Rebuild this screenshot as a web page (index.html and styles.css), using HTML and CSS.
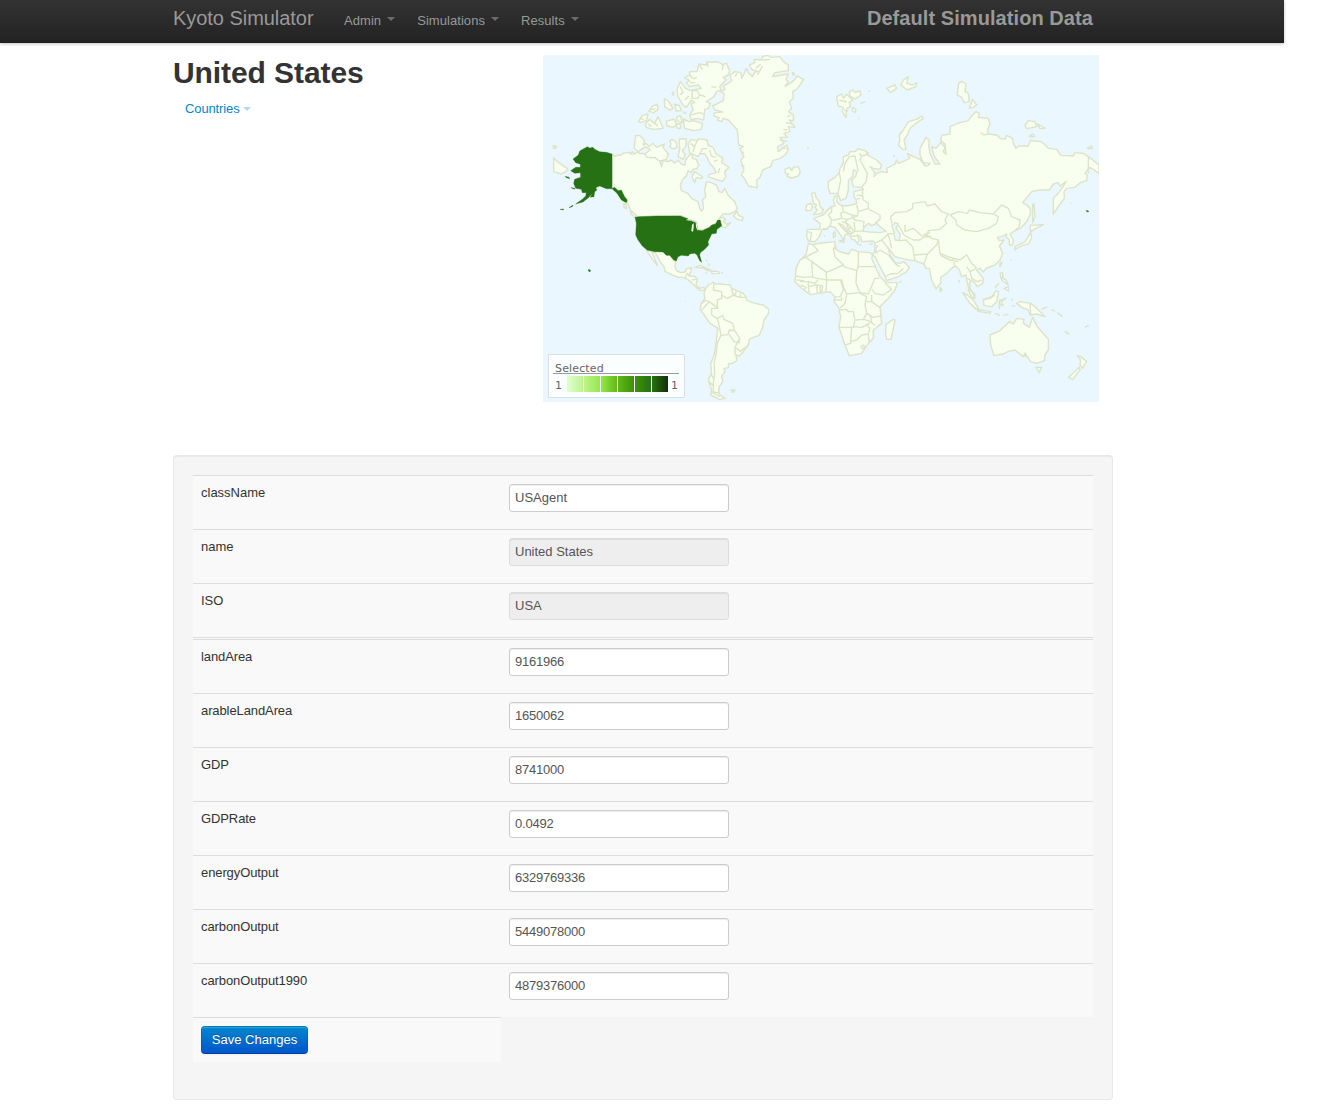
FILE: index.html
```html
<!DOCTYPE html>
<html lang="en">
<head>
<meta charset="utf-8">
<title>Kyoto Simulator</title>
<link rel="stylesheet" href="styles.css">
</head>
<body>
<header class="navbar">
  <div class="container nav-row">
    <a class="brand">Kyoto Simulator</a>
    <nav class="nav">
      <a>Admin<i class="caret"></i></a>
      <a>Simulations<i class="caret"></i></a>
      <a>Results<i class="caret"></i></a>
    </nav>
    <strong class="nav-title">Default Simulation Data</strong>
  </div>
</header>
<main class="container">
  <section class="top">
    <div class="intro">
      <h1>United States</h1>
      <a class="countries">Countries<i class="caret"></i></a>
    </div>
    <div class="map">
      <svg class="world" viewBox="0 0 1668 1041" preserveAspectRatio="none">
        <!-- North America -->
        <g class="land" transform="translate(0 255)">
          <path d="M207 42L215 50 225 45 230 47 240 40 258 37 263 42 268 35 272 43 285 35 291 41 300 40 320 48 322 54 335 52 350 62 356 80 360 62 375 65 385 60 395 70 405 60 415 72 425 75 428 60 440 45 448 40 448 55 460 58 468 75 462 85 450 88 445 98 435 92 430 108 418 120 412 135 415 152 435 160 445 175 465 185 470 205 475 213 482 205 480 190 478 180 488 170 485 150 490 125 505 128 520 135 528 155 537 158 545 145 555 165 575 185 583 205 575 215 560 222 540 222 528 236 540 232 548 238 540 244 552 253 563 248 548 262 538 262 530 242 515 252 500 262 480 270 465 270 460 245 430 235 415 227 283 230 275 222 262 210 255 190 240 170 228 150 207 143Z"/>
          <path d="M32 53L47 68 75 87 68 95 55 102 32 95ZM32 16L41 20 36 26 31 24ZM571 228L582 213 586 226 600 232 598 242 583 238ZM242 192L248 190 251 206 244 203ZM262 212L282 228 276 232 264 222Z"/>
          <path d="M278 -13L290 -14 305 2 300 15 310 10 318 20 330 10 340 22 365 12 360 22 376 42 370 58 350 63 335 52 312 52 305 42 322 30 308 20 285 35 273 25ZM380 2L388 -2 400 8 402 22 390 27 380 20 384 12ZM409 -3L430 -3 428 20 418 32 427 45 420 58 405 50 410 30ZM435 10L445 -2 462 2 468 -4 492 0 495 15 510 22 518 40 540 55 535 67 558 82 545 95 548 112 538 124 518 118 495 110 497 104 520 98 510 80 500 70 495 58 485 40 470 42 465 50 440 38ZM455 95L465 102 478 110 475 116 460 112 455 128 447 110Z"/>
          <path class="line" d="M442 10L455 20 450 36M455 20L462 2M470 42L478 26 492 26M500 30L505 48 520 52M512 64L524 60M525 100L530 85"/>
        </g>
        <g class="land" transform="translate(0 -15)">
          <path d="M425 83L440 75 440 65 462 65 468 42 490 45 492 36 525 36 540 44 550 40 560 62 555 75 540 82 550 88 530 110 535 120 520 125 513 140 490 155 502 160 496 175 485 178 482 210 460 205 445 210 440 195 450 180 445 160 455 158 445 150 430 172 420 165 405 140 402 118 412 95 428 115 442 122 460 118 475 115 465 105 440 110 430 98 440 92ZM448 122L462 122 470 135 464 145 447 145ZM421 207L438 215 450 212 478 220 475 238 452 242 425 235ZM364 146L376 153 390 175 380 180 365 170ZM395 162L410 168 415 182 400 183ZM286 215L298 196 315 192 310 212 293 217ZM307 222L320 208 335 220 345 200 355 222 360 235 330 238 310 232ZM317 184L328 168 343 163 345 178 332 188ZM370 214L383 210 395 208 400 225 390 232 372 228ZM402 200L413 198 418 218 402 212ZM400 222L413 222 412 236 402 234ZM387 130L392 126 391 136ZM420 185L430 192"/>
          <path class="line" d="M440 75L450 86 462 82M468 42L478 58M492 36L496 52M440 98L458 98M505 110L520 112M470 135L488 140M445 195L470 188 482 192M412 110L420 128 412 134M425 150L438 138M320 180L338 176M290 205L302 208M315 222L325 230M335 220L345 228M540 44L538 60"/>
        </g>
        <!-- Greenland, Iceland, Svalbard -->
        <g class="land" transform="translate(411 -15)">
          <path d="M98 168L130 152 132 130 122 125 135 118 130 108 148 98 155 92 150 75 165 65 183 68 185 85 200 55 205 68 217 80 225 66 235 65 215 58 208 45 225 38 222 28 245 30 248 20 262 16 275 22 300 20 310 35 325 45 325 62 285 68 278 80 305 75 325 72 318 88 325 95 315 110 330 100 345 88 350 78 371 88 360 105 350 118 338 125 340 145 328 155 335 175 325 185 340 195 340 212 328 210 345 232 325 230 330 245 312 250 322 262 300 262 312 280 293 290 295 305 320 285 325 300 315 315 300 325 278 332 272 350 248 360 240 382 230 390 232 413 205 408 193 385 184 375 192 360 182 330 192 320 180 295 190 290 176 285 172 240 145 210 130 205 125 215 112 210 118 203 102 198 103 188 128 186 105 180Z"/>
          <path d="M315 358L328 352 335 362 340 352 355 350 361 365 355 378 335 384 320 378 326 372 316 370ZM470 140L485 132 490 145 500 133 518 150 508 158 512 170 500 175 498 202 487 185 490 172 475 168ZM508 125L520 120 525 128 540 122 543 135 525 147 510 138ZM518 172L528 178 525 188 517 183ZM337 68L343 70 340 76ZM541 160L556 155M566 125L571 123M382 297L386 293M535 204L537 207"/>
          <path class="line" d="M165 80L172 70M228 55L242 42M232 75L248 48M248 30L270 28M322 200L332 196M318 218L336 222M310 238L322 240M300 270L322 274M305 292L320 296M184 312L192 305M183 345L194 350M478 150L500 156M492 180L504 184"/>
        </g>
        <!-- Central and South America -->
        <g class="land" transform="translate(291 555)">
          <path d="M20 32L32 33 70 34 80 46 92 46 102 62 107 64 105 80 110 92 122 98 135 96 140 85 155 84 152 95 148 108 165 110 172 118 168 135 180 145 192 142 198 150 182 152 170 143 155 128 145 120 130 112 115 112 95 104 75 94 72 80 60 65 50 45 45 38 36 38 42 52 52 76 40 62 28 44Z"/>
          <path d="M196 148L205 135 222 126 225 132 240 132 270 135 275 145 290 152 310 160 318 172 322 182 345 190 370 195 386 208 385 222 372 240 368 262 357 287 345 290 328 298 325 315 310 335 298 348 288 345 290 362 278 370 265 372 265 383 252 385 255 395 245 408 248 425 238 440 236 455 240 465 255 475 238 478 212 465 215 450 208 430 206 415 215 400 212 372 222 345 228 315 230 290 234 265 210 250 195 228 180 208 184 190 195 175 192 160Z"/>
          <path d="M165 82L180 76 210 90 205 93 188 84ZM213 93L235 95 238 100 217 101ZM195 98L202 100M243 98L249 99M198 58L202 64M205 70L208 77M135 184L137 185M271 451L284 450 282 456 273 456"/>
          <path class="line" d="M222 128L220 150 245 155 245 175 232 180 232 205 215 205 215 225 232 235 248 226 252 238 278 250 284 272 298 292 298 308 282 305 268 284M285 322L302 334 325 315M300 292L285 322M275 147L278 160 285 168 300 172 318 172M288 155L285 170M302 160L300 174M262 175L245 165M262 175L282 165M185 190L195 182 208 185 190 205 185 212M208 185L235 205M232 235L238 260 243 286 264 284 268 270 284 272M243 286L232 310 228 345 222 370 224 400 220 430 220 455 238 460M212 400L220 415M208 425L218 436M214 455L232 466 240 470M285 322L285 345M135 112L142 100 148 108M155 120L170 118"/>
        </g>
        <!-- Europe and Asia -->
        <g class="land" transform="translate(711 255)">
          <path d="M150 160L145 145 145 125 165 112 178 98 180 85 190 70 190 50 205 45 210 35 225 35 235 27 255 32 265 40 262 45 290 60 305 75 300 88 280 85 270 80 285 98 282 110 290 100 305 95 322 98 320 85 345 72 350 60 355 70 375 62 390 55 382 40 400 50 420 58 435 78 445 76 450 70 430 68 420 45 420 25 438 -8 448 0 446 15 450 40 465 72 480 72 462 48 455 20 468 25 482 8 495 22 490 35 498 43 495 12 482 2 485 -14 510 -18 510 -40 540 -52 565 -58 575 -72 588 -85 598 -80 595 -68 625 -65 630 -48 622 -30 627 -18 650 -15 660 -5 675 -2 680 -14 698 -5 700 10 708 25 715 18 745 18 750 2 785 5 805 25 830 28 842 46 880 48 885 38 910 40 925 50 957 75 957 102 940 88 928 82 915 100 922 105 920 122 900 128 885 142 860 145 852 155 853 175 840 192 820 222 820 175 835 160 850 138 858 125 840 138 835 128 820 132 808 150 780 150 755 155 728 188 740 195 750 205 752 220 740 245 722 265 705 272 690 282 700 300 698 315 688 315 688 300 678 290 680 282 665 290 652 292 658 302 672 300 658 318 668 340 660 360 645 375 620 384 610 395 600 385 590 390 610 415 608 430 592 440 582 425 572 422 568 430 572 450 585 465 582 475 572 460 565 440 560 420 558 405 545 410 538 390 528 378 518 382 500 400 482 412 482 430 468 446 455 420 448 385 438 385 432 372 405 362 385 360 365 355 345 350 338 340 325 325 330 345 345 368 360 370 372 365 388 382 380 395 355 410 320 422 316 410 300 380 285 350 277 345 284 335 285 307 278 303 245 305 242 290 230 285 238 300 232 310 225 300 215 298 210 285 200 270 188 255 175 250 185 262 205 282 195 285 192 300 178 280 165 262 150 258 140 266 125 270 118 290 105 305 85 303 80 290 82 268 120 268 120 250 100 235 115 230 130 225 145 208 155 200 165 198 160 180 165 168 172 168 170 185 180 195 195 198 215 195 230 190 228 178 222 170 222 155 250 148 245 142 220 140 215 120 228 108 230 95 220 90 218 108 205 122 205 150 198 175 182 182 174 160Z"/>
          <path d="M95 160L105 158 108 172 118 185 120 200 130 208 125 220 100 224 112 210 105 202 110 195 100 190 98 175ZM78 205L80 195 92 190 98 200 92 212 78 212ZM160 280L165 275 166 290 160 293ZM178 303L190 300 192 308ZM232 313L245 316M268 314L278 310M132 288L136 287M340 48L345 50"/>
          <path d="M360 0L358 -15 370 -30 385 -55 410 -62 425 -72 430 -65 405 -48 390 -35 382 -15 372 0 378 28 368 28 355 15ZM536 -170L545 -175 558 -168 555 -145 565 -140 568 -115 552 -112 545 -128 532 -135ZM568 -95L578 -122 585 -112 590 -105 580 -98ZM735 -45L745 -58 765 -55 770 -40 740 -34ZM773 -48L795 -36 780 -34ZM748 -10L758 -18 764 -10ZM922 25L935 18 936 26ZM320 -155L345 -165 350 -155 332 -142ZM362 -165L370 -180 385 -190 380 -170 398 -165 410 -172 408 -160 382 -150ZM758 195L762 190 765 230 758 248ZM750 256L790 254 768 265 752 275 755 295 745 312 728 316 710 325 705 330 705 320 735 305 742 295 752 275ZM873 188L874 191"/>
          <path class="line" d="M178 100L182 120 178 140 174 160M190 95L195 70 208 50 225 48 235 95M238 40L245 48 240 60 262 100 258 125 245 142M245 48L258 45 262 38M230 165L248 168 250 180 265 190 265 205 235 215 230 195M248 150L248 168M230 178L240 175M187 198L190 215 215 225 232 228 235 215M155 200L155 215 145 225 155 240 150 258M190 215L182 220 185 235 165 240 158 240M185 235L205 238 220 232 232 228M215 228L225 240 252 245 250 262M205 238L195 245 210 258 222 275 250 272M222 245L225 272M185 245L200 250 205 270 218 280M200 262L215 266M210 282L222 278M214 288L228 288M265 207L300 225 300 238 285 250M82 275L95 278 90 303M128 265L145 268M336 250L332 230 345 218 380 215 398 205 398 190 435 185 442 198 465 192 485 215 505 222 495 240 500 250 480 268 445 272 440 285 430 292 400 265 375 275 375 255M355 255L372 285 400 300 420 300 440 285 455 295 475 300 470 315 442 342 402 345 398 320 378 300 358 302M402 345L405 362M442 342L432 372M475 300L480 340 510 352 540 360 560 345 575 370 590 385M480 345L510 360 535 365M518 355L525 378M510 225L535 215 562 220 568 210 600 218 640 222 655 230 650 250 625 265 590 275 555 270 530 255 528 240 510 225M640 222L665 195 685 205 695 230 720 240 718 260 705 272M560 380L570 395 590 385M570 395L575 415 592 425 605 420M560 415L575 422M288 308L305 300 325 282 345 280M305 300L325 325M285 340L300 330 325 345 350 375 360 380M316 410L330 402 355 400 370 385M322 280L328 295 335 325M285 340L292 315M925 50L925 100M602 -22L612 -15 625 -18M430 285L450 278M435 292L452 288M-6 0"/>
          <path class="water" d="M248 274L252 262 265 250 275 257 290 250 300 260 318 274 300 278 270 276ZM336 256L345 248 355 252 348 265 360 282 358 302 345 300 342 278Z"/>
        </g>
        <!-- Africa -->
        <g class="land" transform="translate(711 555)">
          <path d="M85 10L98 14 125 9 165 5 165 25 178 35 205 42 215 28 235 35 270 38 278 45 275 55 288 85 300 110 318 128 352 128 345 150 325 175 300 200 305 250 280 270 280 295 265 310 245 340 208 347 195 315 177 262 182 230 175 200 162 185 165 170 150 155 130 158 90 164 65 145 45 125 48 85 60 60 78 45ZM318 253L340 238 345 240 333 298 320 298 317 280ZM358 126L365 125"/>
          <path class="line" d="M98 14L115 32 95 42 75 52 62 60M78 52L140 97 190 75 165 50 160 25 170 20M95 65L98 110 70 112 48 108M190 75L192 80 230 92 228 130 240 158 200 162 192 145 185 120 140 120 138 97M235 35L235 80 285 80M235 80L230 92M98 112L130 118 140 120 138 155M50 120L72 122M60 125L85 125 85 140 110 135 128 138 125 158M62 135L78 142 72 150M85 140L88 160M110 135L112 160M120 136L121 158M85 125L105 130 115 118M182 122L190 150 180 170 165 172M240 158L265 162 272 145 285 115 298 115M275 148L285 160 310 165 335 148 315 130M200 162L195 190 180 205M178 210L200 208 205 215 220 215 225 240 220 262 177 262M240 160L260 170 255 195 260 220 250 238 228 240M165 180L185 180 185 170M260 185L275 185 275 165M275 185L300 203M260 220L280 232 304 228M250 238L265 242 285 255M270 225L276 248M222 260L245 262 270 250M215 262L212 310 195 315M212 305L230 300 245 285 265 282 270 265 258 252M265 282L268 308M242 320L250 315 254 320 248 326 242 320"/>
        </g>
        <!-- Oceania and South-East Asia -->
        <g class="land" transform="translate(1071 405)">
          <path d="M270 435L300 422 328 395 340 402 350 385 372 388 370 400 388 412 398 382 412 410 445 448 445 480 435 495 433 512 410 520 392 515 375 490 370 500 345 480 325 484 310 492 282 497 272 465ZM408 532L425 532 418 548ZM532 497L542 500 560 514 548 535 540 525 542 510ZM506 562L538 532 540 540 518 569ZM188 308L202 315 220 330 235 355 228 358 210 340ZM231 358L272 365 270 370 235 364ZM250 330L275 320 288 303 296 305 290 335 275 350 252 346ZM298 332L318 325 303 335 310 348 300 342 298 356ZM300 250L308 248 308 265 318 270 325 285 305 270ZM312 295L325 290 325 303ZM285 293L297 280M300 230L300 220 306 217ZM120 292L127 300 120 304ZM350 340L360 335 392 340 410 355 435 380 410 372 390 375 385 360 365 352ZM285 370L300 376M310 376L325 373M335 325L337 333M335 347L346 348M425 358L442 350M455 358L465 364M472 368L487 380M495 424L508 433M555 412L566 406M333 208L335 211M178 270L177 278M205 300L215 303 225 325 216 322Z"/>
          <path class="line" d="M390 340L392 374M250 328L270 325 285 315M372 490L378 500 376 488"/>
        </g>
        <!-- Selected country -->
        <g class="selected" transform="translate(0 255)">
          <path d="M276 232L288 230 340 228 412 228 422 232 435 236 428 241 445 243 458 248 463 260 462 270 478 272 490 266 500 262 506 255 518 252 524 240 532 240 536 258 522 268 520 280 506 282 500 295 495 305 497 315 485 328 472 338 470 345 476 367 470 362 462 345 455 340 440 342 436 348 415 346 405 350 400 363 392 360 380 346 370 346 360 336 335 335 312 330 298 318 285 300 278 285 280 250Z"/>
          <path d="M207 42L190 37 170 35 155 28 150 22 140 24 133 20 110 33 106 45 90 57 98 68 112 73 112 82 98 82 83 92 95 100 112 98 113 112 95 118 92 130 98 145 115 148 118 158 130 158 128 168 118 178 98 192 120 186 138 172 148 160 142 172 153 170 155 155 162 150 158 143 170 138 190 146 207 146 215 142 225 152 235 150 245 170 253 180 250 188 235 180 222 160 207 146ZM66 109L78 112 80 116 70 113ZM84 143L96 145 94 148ZM78 203L90 195 88 200ZM51 208L62 207 61 210ZM136 388L143 391 141 396 137 394ZM1630 211L1637 213 1636 216 1631 215Z"/>
          <path class="lake" d="M447 255L452 249 452 262 450 275 445 273ZM458 250L463 256 464 272 460 264Z"/>
        </g>
      </svg>
      <div class="legend">
        <div class="legend-title">Selected</div>
        <div class="legend-scale"><span>1</span><div class="swatches"><i class="s1"></i><i class="s2"></i><i class="s3"></i><i class="s4"></i><i class="s5"></i><i class="s6"></i></div><span>1</span></div>
      </div>
    </div>
  </section>
  <form class="well">
    <div class="row"><label>className</label><input value="USAgent"></div>
    <div class="row"><label>name</label><input value="United States" readonly></div>
    <div class="row"><label>ISO</label><input value="USA" readonly></div>
    <div class="divider"></div>
    <div class="row"><label>landArea</label><input class="num" value="9161966"></div>
    <div class="row"><label>arableLandArea</label><input class="num" value="1650062"></div>
    <div class="row"><label>GDP</label><input class="num" value="8741000"></div>
    <div class="row"><label>GDPRate</label><input class="num" value="0.0492"></div>
    <div class="row"><label>energyOutput</label><input class="num" value="6329769336"></div>
    <div class="row"><label>carbonOutput</label><input class="num" value="5449078000"></div>
    <div class="row"><label>carbonOutput1990</label><input class="num" value="4879376000"></div>
    <div class="actions"><button type="button">Save Changes</button></div>
  </form>
</main>
</body>
</html>
```
FILE: styles.css
```css
* { box-sizing: border-box; }
body {
  margin: 0;
  background: #fff;
  color: #333;
  font: 13px/18px "Liberation Sans", Arial, sans-serif;
}
.container { width: 940px; margin-left: 173px; }
.navbar {
  width: 1284px;
  height: 43px;
  background: linear-gradient(#333, #222);
  box-shadow: 0 1px 3px rgba(0,0,0,.25), inset 0 -1px 0 rgba(0,0,0,.1);
  color: #999;
}
.nav-row { display: flex; align-items: flex-start; }
.brand { width: 161px; padding-top: 8px; font-size: 20px; line-height: 20px; letter-spacing: -.04px; }
.nav { display: flex; flex: 1; gap: 22px; padding: 11px 0 0 10px; line-height: 19px; letter-spacing: .06px; }
.nav a { display: flex; }
.caret {
  width: 0;
  height: 0;
  border: 4px solid transparent;
  border-top-color: currentColor;
  border-bottom: 0;
  opacity: .6;
}
.nav .caret { margin: 6px 0 0 6px; }
.nav-title { padding: 8px 20px 0 0; font-size: 20px; line-height: 20px; letter-spacing: .07px; }

.top { display: flex; height: 412px; padding-top: 12px; }
.intro { width: 370px; }
h1 { margin: 0; font-size: 30px; line-height: 36px; letter-spacing: -.08px; }
.countries { display: flex; align-items: center; gap: 3px; padding: 9px 0 0 12px; color: #08c; letter-spacing: -.12px; }
.countries .caret { opacity: .3; }

.map { position: relative; width: 556px; height: 347px; background: #eaf7fe; overflow: hidden; }
.world { display: block; width: 556px; height: 347px; }
.land { fill: #f9ffee; stroke: #dce3c9; stroke-width: 4.2; stroke-linejoin: round; }
.land .line { fill: none; }
.land .water { fill: #eaf7fe; }
.selected { fill: #267114; stroke: #267114; stroke-width: 1; }
.selected .lake { fill: #f9ffee; stroke: none; }
.legend {
  position: absolute;
  left: 5px;
  bottom: 4px;
  width: 137px;
  height: 44px;
  padding: 7px 5px 0 4px;
  border: 1px solid #d9dfe2;
  background: #fbfeff;
  color: #666;
  font: 11px/12px "DejaVu Sans", sans-serif;
}
.legend-title { height: 12px; padding-left: 2px; border-bottom: 1px solid #999; line-height: 13px; letter-spacing: .15px; }
.legend-scale { display: flex; padding: 2px 1px 0 2px; }
.legend-scale span { padding-top: 4px; }
.swatches { display: flex; gap: 1px; margin: 0 3px 0 5px; }
.swatches i { width: 16px; height: 16px; }
.s1 { background: linear-gradient(90deg, #e0ffd4, #bdf58c); }
.s2 { background: linear-gradient(90deg, #bdf58c, #98e64f); }
.s3 { background: linear-gradient(90deg, #98e64f, #62b814); }
.s4 { background: linear-gradient(90deg, #62b814, #3d910a); }
.s5 { background: linear-gradient(90deg, #3d910a, #267114); }
.s6 { background: linear-gradient(90deg, #267114, #132f09); }

.well {
  height: 645px;
  padding: 19px;
  background: #f5f5f5;
  border: 1px solid rgba(0,0,0,.05);
  border-radius: 4px;
  box-shadow: inset 0 1px 1px rgba(0,0,0,.05);
}
.row {
  display: grid;
  grid-template-columns: 308px 220px;
  height: 54px;
  padding: 8px;
  border-top: 1px solid #ddd;
  background: #f9f9f9;
}
.divider { height: 2px; border-top: 1px solid #ddd; background: #f9f9f9; }
.divider ~ .row label { letter-spacing: -.1px; }
input {
  height: 28px;
  padding: 3px 5px 5px;
  border: 1px solid #ccc;
  border-radius: 3px;
  background: #fff;
  box-shadow: inset 0 1px 1px rgba(0,0,0,.075);
  color: #555;
  font: inherit;
}
input.num { letter-spacing: -.23px; }
input[readonly] { background: #eee; border-color: #ddd; }
.actions { width: 308px; height: 45px; padding: 8px; border-top: 1px solid #ddd; background: #f9f9f9; }
button {
  display: block;
  width: 107px;
  height: 28px;
  padding: 0;
  border: 1px solid;
  border-color: rgba(0,0,0,.1) rgba(0,0,0,.1) rgba(0,0,0,.25);
  border-radius: 4px;
  background: linear-gradient(#08c, #05c) border-box;
  box-shadow: inset 0 1px 0 rgba(255,255,255,.2), 0 1px 2px rgba(0,0,0,.05);
  color: #fff;
  font: inherit;
  text-shadow: 0 -1px 0 rgba(0,0,0,.25);
}
```
